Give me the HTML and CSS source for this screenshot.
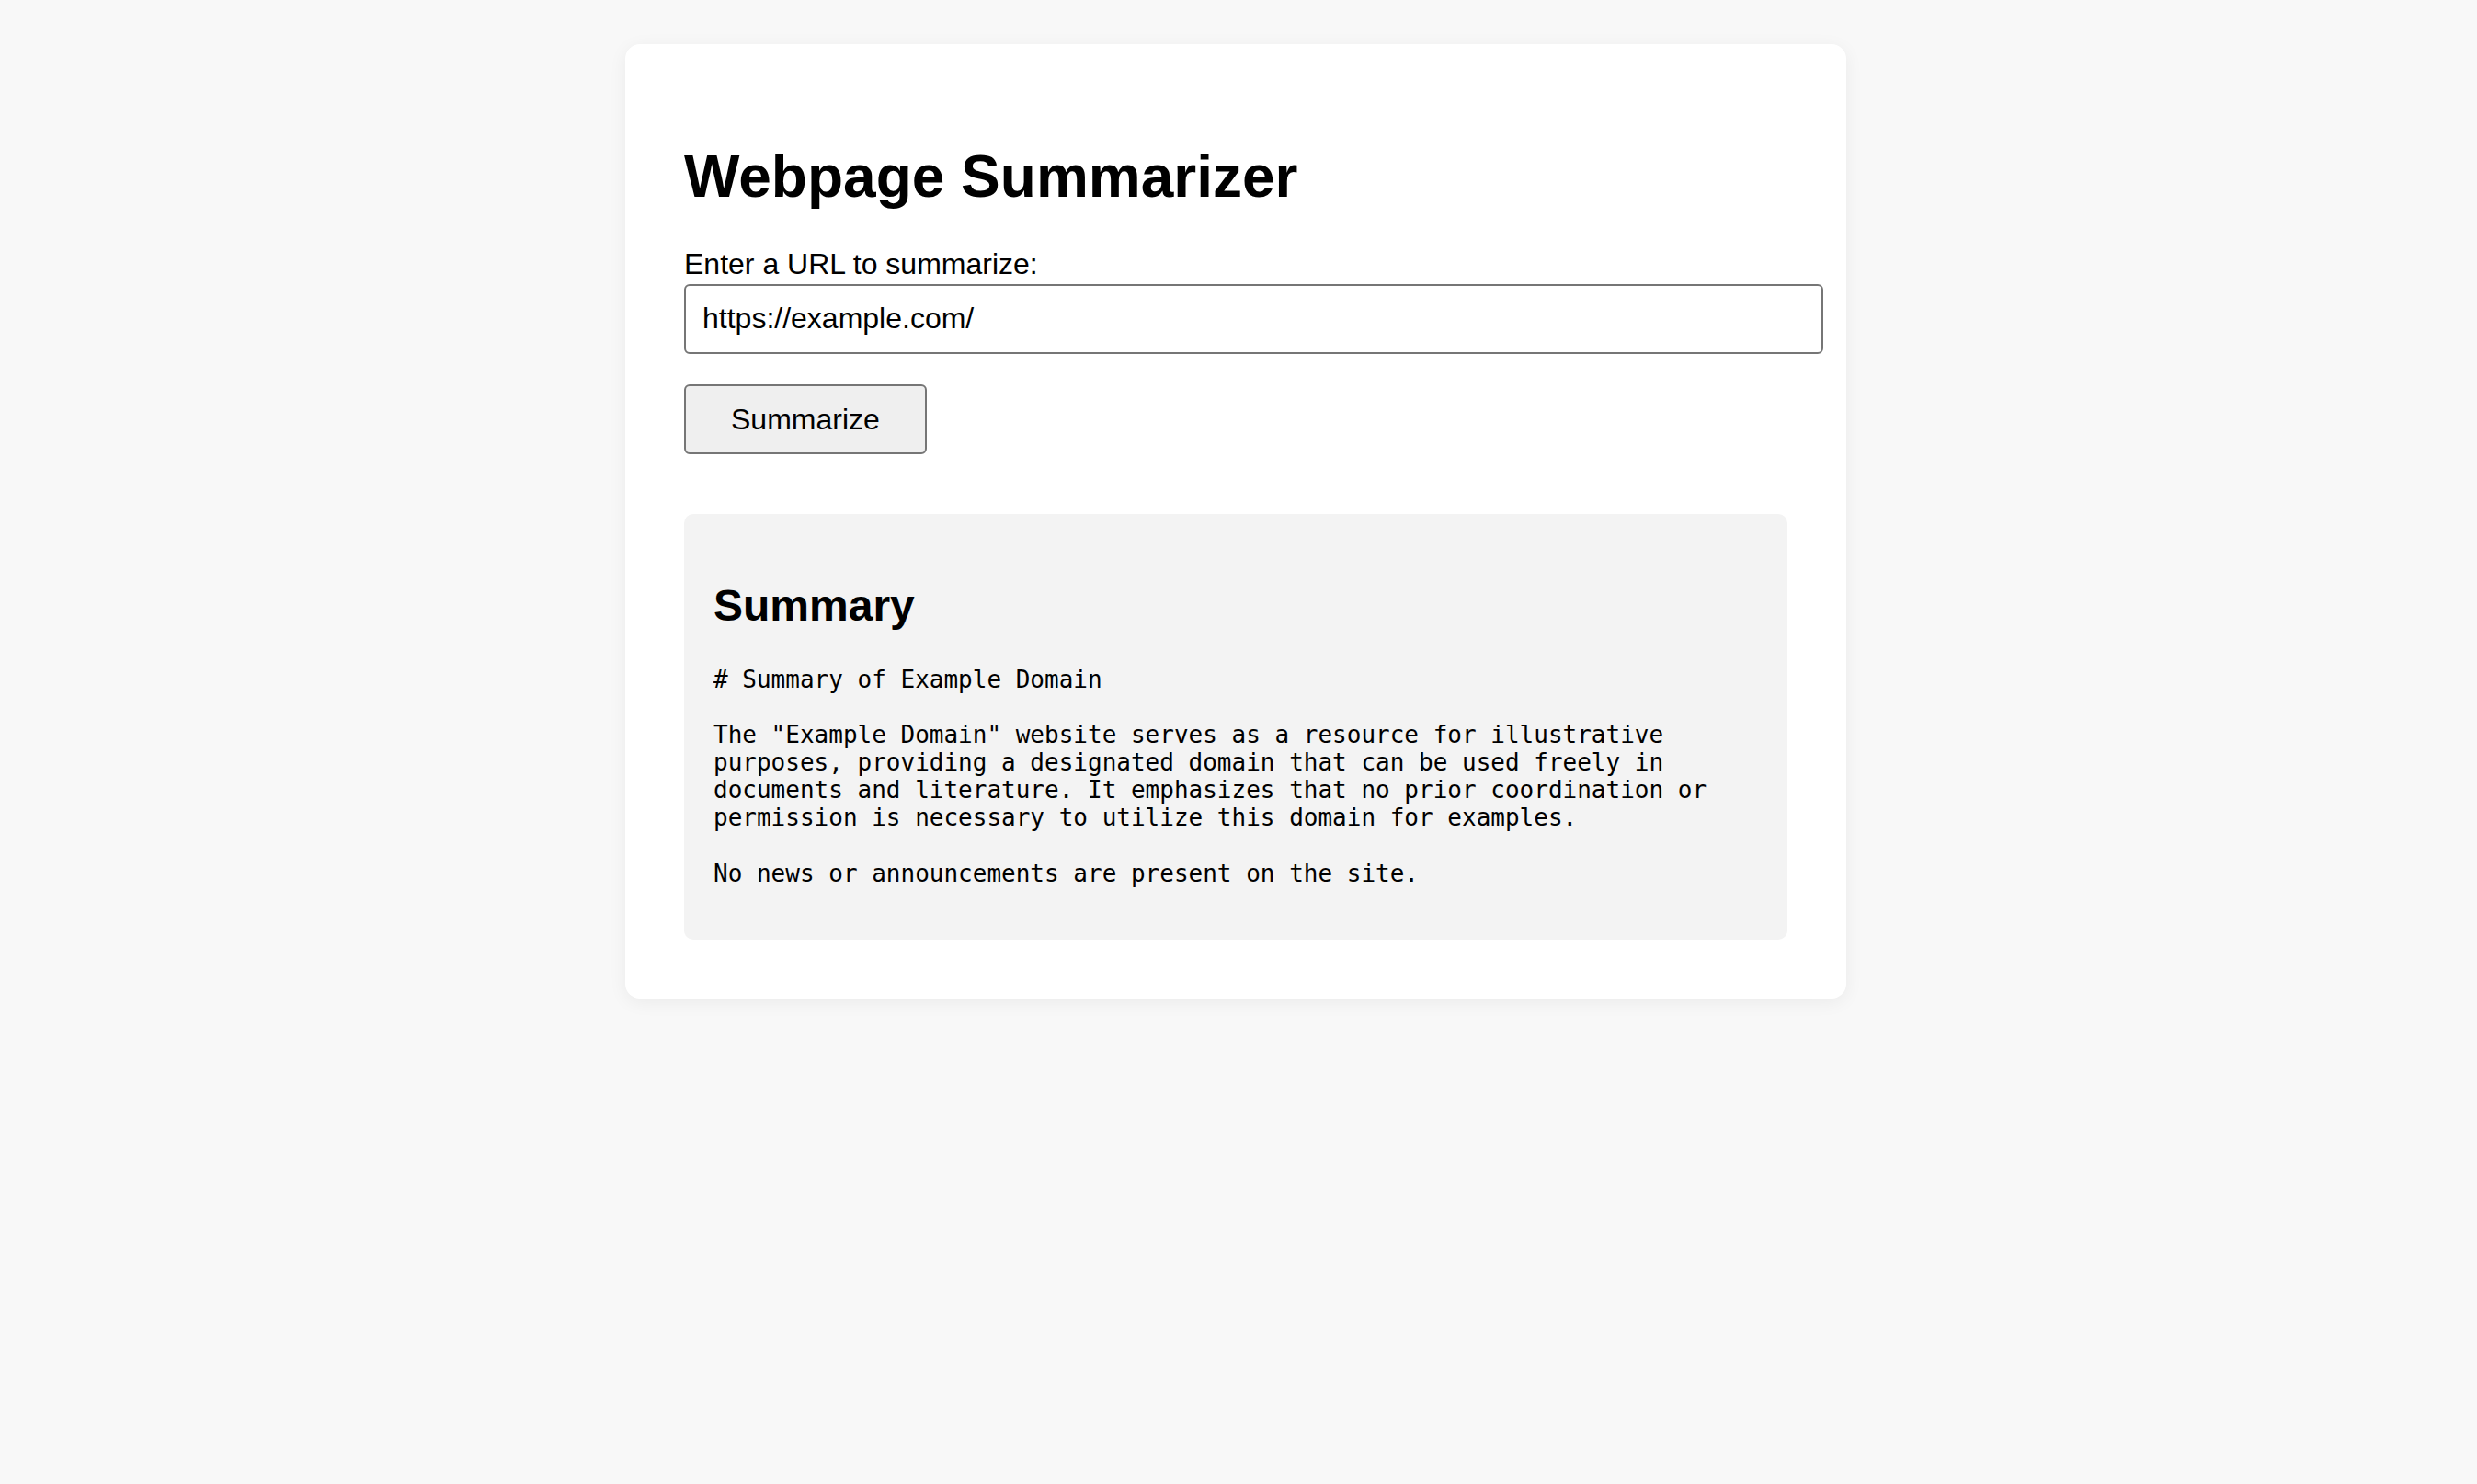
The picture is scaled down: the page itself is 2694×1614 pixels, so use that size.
FILE: index.html
```html
<!DOCTYPE html>
<html lang="en">
<head>
<meta charset="utf-8">
<title>Webpage Summarizer</title>
<link rel="stylesheet" href="styles.css">
</head>
<body>
<main class="card">
  <h1 class="title">Webpage Summarizer</h1>
  <form class="form">
    <label class="label" for="url">Enter a URL to summarize:</label>
    <input class="input" id="url" type="text" value="https://example.com/">
    <div class="actions">
      <button class="button" type="button">Summarize</button>
    </div>
  </form>
  <section class="summary">
    <h2 class="summary-title">Summary</h2>
    <pre class="summary-text"># Summary of Example Domain

The "Example Domain" website serves as a resource for illustrative purposes, providing a designated domain that can be used freely in documents and literature. It emphasizes that no prior coordination or permission is necessary to utilize this domain for examples.

No news or announcements are present on the site.</pre>
  </section>
</main>
</body>
</html>
```
FILE: styles.css
```css
html, body {
  margin: 0;
  background: #f8f8f8;
}

body {
  padding: 48px 6px 60px 0;
  font-family: "Liberation Sans", Arial, sans-serif;
  color: #000;
}

.card {
  box-sizing: border-box;
  width: 1328px;
  margin: 0 auto;
  padding: 64px;
  background: #fff;
  border-radius: 16px;
  box-shadow: 0 4px 20px rgba(0, 0, 0, 0.06);
}

.title {
  margin: 44px 0 39px;
  font-size: 64px;
  font-weight: bold;
  line-height: 73.5px;
}

.form {
  display: flex;
  flex-direction: column;
}

.label {
  display: block;
  font-size: 32px;
  line-height: 37px;
  margin-bottom: 3px;
}

.input {
  box-sizing: border-box;
  width: 1239px;
  height: 76px;
  padding: 18px;
  font-family: "Liberation Sans", Arial, sans-serif;
  font-size: 32px;
  line-height: 36px;
  color: #000;
  border: 2px solid #767676;
  border-radius: 6px;
  background: #fff;
  outline: none;
}

.actions {
  display: flex;
  margin-top: 33px;
}

.button {
  box-sizing: border-box;
  height: 76px;
  padding: 0 49px;
  font-family: "Liberation Sans", Arial, sans-serif;
  font-size: 32px;
  line-height: 36px;
  color: #000;
  background: #efefef;
  border: 2px solid #767676;
  border-radius: 6px;
}

.summary {
  margin-top: 65px;
  padding: 32px;
  background: #f3f3f3;
  border-radius: 10px;
}

.summary-title {
  margin: 40px 0 38px;
  font-size: 48px;
  font-weight: bold;
  line-height: 55px;
}

.summary-text {
  margin: 0 0 25px;
  font-family: "DejaVu Sans Mono", monospace;
  font-size: 26px;
  line-height: 30.15px;
  white-space: pre-wrap;
}
```
